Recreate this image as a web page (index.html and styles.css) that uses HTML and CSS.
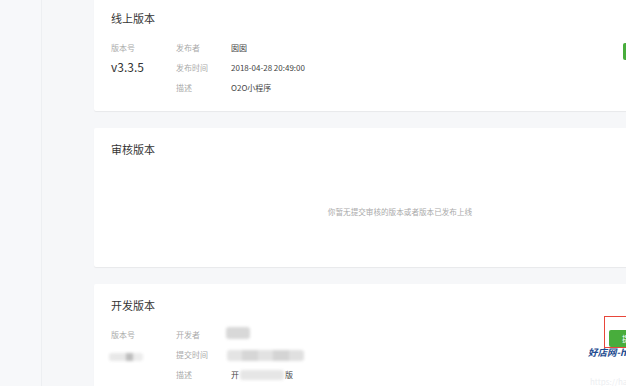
FILE: index.html
```html
<!DOCTYPE html>
<html lang="zh-CN">
<head>
<meta charset="utf-8">
<title>版本管理</title>
<link rel="stylesheet" href="styles.css">
</head>
<body>
<div class="layout">
  <aside class="sidebar"></aside>
  <main class="main">
    <section class="card card-first">
      <h2 class="card-title">线上版本</h2>
      <div class="card-body">
        <div class="col-version">
          <div class="label">版本号</div>
          <div class="version">v3.3.5</div>
        </div>
        <div class="meta">
          <div class="label">发布者</div><div class="value">囡囡</div>
          <div class="label">发布时间</div><div class="value">2018-04-28 20:49:00</div>
          <div class="label">描述</div><div class="value">O2O小程序</div>
        </div>
        <div class="actions">
          <span class="btn btn-narrow">版本回退</span>
        </div>
      </div>
    </section>

    <section class="card">
      <h2 class="card-title">审核版本</h2>
      <div class="empty">你暂无提交审核的版本或者版本已发布上线</div>
    </section>

    <section class="card">
      <h2 class="card-title">开发版本</h2>
      <div class="card-body">
        <div class="col-version">
          <div class="label">版本号</div>
          <div class="version"><span class="blur blur-version"></span></div>
        </div>
        <div class="meta">
          <div class="label">开发者</div><div class="value"><span class="blur blur-dev"></span></div>
          <div class="label">提交时间</div><div class="value"><span class="blur blur-time"></span></div>
          <div class="label">描述</div><div class="value">开<span class="blur blur-desc"></span>版</div>
        </div>
        <div class="actions">
          <span class="btn">提交审核</span>
        </div>
      </div>
    </section>
  </main>
</div>
<div class="mark-box"></div>
<div class="watermark">好店网-haodian.com</div>
<div class="watermark-url">https://haodian.com</div>
</body>
</html>
```
FILE: styles.css
```css
html, body {
  margin: 0;
  padding: 0;
  height: 100%;
}
body {
  background: #f6f7f9;
  overflow: hidden;
  font-family: "Noto Sans CJK SC", "Liberation Sans", sans-serif;
  color: #333;
  position: relative;
}
.layout {
  display: flex;
  width: 900px;
  min-height: 100vh;
}
.sidebar {
  width: 41px;
  flex: none;
  background: #f7f8fa;
  border-right: 1px solid #edeff2;
}
.main {
  flex: none;
  padding-left: 52px;
  margin-top: -3px;
}
.card {
  width: 578px;
  background: #fff;
  border-radius: 2px;
  box-shadow: 0 1px 1px rgba(0, 0, 0, 0.06);
  padding: 14px 17px 13px 17px;
  margin-bottom: 17px;
}
.card-title {
  margin: 0;
  font-size: 11px;
  line-height: 14px;
  font-weight: normal;
  color: #353535;
}
.card-body {
  display: flex;
  align-items: flex-start;
  margin-top: 13px;
}
.col-version {
  width: 65px;
  flex: none;
}
.label {
  font-size: 8px;
  line-height: 20px;
  color: #aaa;
}
.version {
  font-size: 12px;
  line-height: 18px;
  color: #333;
  height: 18px;
}
.meta {
  display: grid;
  grid-template-columns: 55px auto;
  grid-auto-rows: 20px;
}
.value {
  font-size: 8px;
  line-height: 20px;
  color: #444;
  display: flex;
  align-items: center;
}
.actions {
  margin-left: auto;
  margin-top: 5px;
  padding-right: 22px;
  display: flex;
}
.btn {
  display: block;
  height: 17px;
  line-height: 17px;
  padding: 0 13px;
  background: #48ad3c;
  color: #fff;
  font-size: 8px;
  border-radius: 2px;
  white-space: nowrap;
}
.btn-narrow {
  padding: 0 6px;
}
.empty {
  height: 111px;
  margin-bottom: -13px;
  display: flex;
  align-items: center;
  justify-content: center;
  font-size: 7.6px;
  color: #aaa;
}
.blur {
  display: inline-block;
  background: #dcdcdc;
  filter: blur(1.5px);
  border-radius: 3px;
}
.blur-version {
  width: 34px;
  height: 8px;
  margin-left: -2px;
  margin-top: 8px;
  vertical-align: top;
  background: linear-gradient(90deg, #e8e8e8 0 50%, #bdbdbd 50% 72%, #ececec 72% 100%);
}
.blur-dev {
  width: 24px;
  height: 12px;
  margin-left: -5px;
  margin-top: -4px;
  background: #d8d8d8;
}
.blur-time {
  width: 77px;
  height: 11px;
  margin-left: -4px;
  background: linear-gradient(90deg, #e4e4e4 0 20%, #d6d6d6 20% 40%, #e2e2e2 40% 60%, #d4d4d4 60% 80%, #e0e0e0 80% 100%);
}
.blur-desc {
  width: 44px;
  height: 10px;
  margin: 0 1px;
  background: #e6e6e6;
}
.mark-box {
  position: absolute;
  left: 604px;
  top: 316px;
  width: 80px;
  height: 30px;
  border: 1.5px solid #e8463a;
}
.watermark {
  position: absolute;
  left: 588px;
  top: 346px;
  font-size: 9.5px;
  line-height: 12px;
  font-weight: bold;
  font-style: italic;
  color: #1d4b8f;
  white-space: nowrap;
}
.watermark-url {
  position: absolute;
  left: 590px;
  top: 377px;
  font-size: 8px;
  line-height: 10px;
  color: #eceef1;
  white-space: nowrap;
}
```
